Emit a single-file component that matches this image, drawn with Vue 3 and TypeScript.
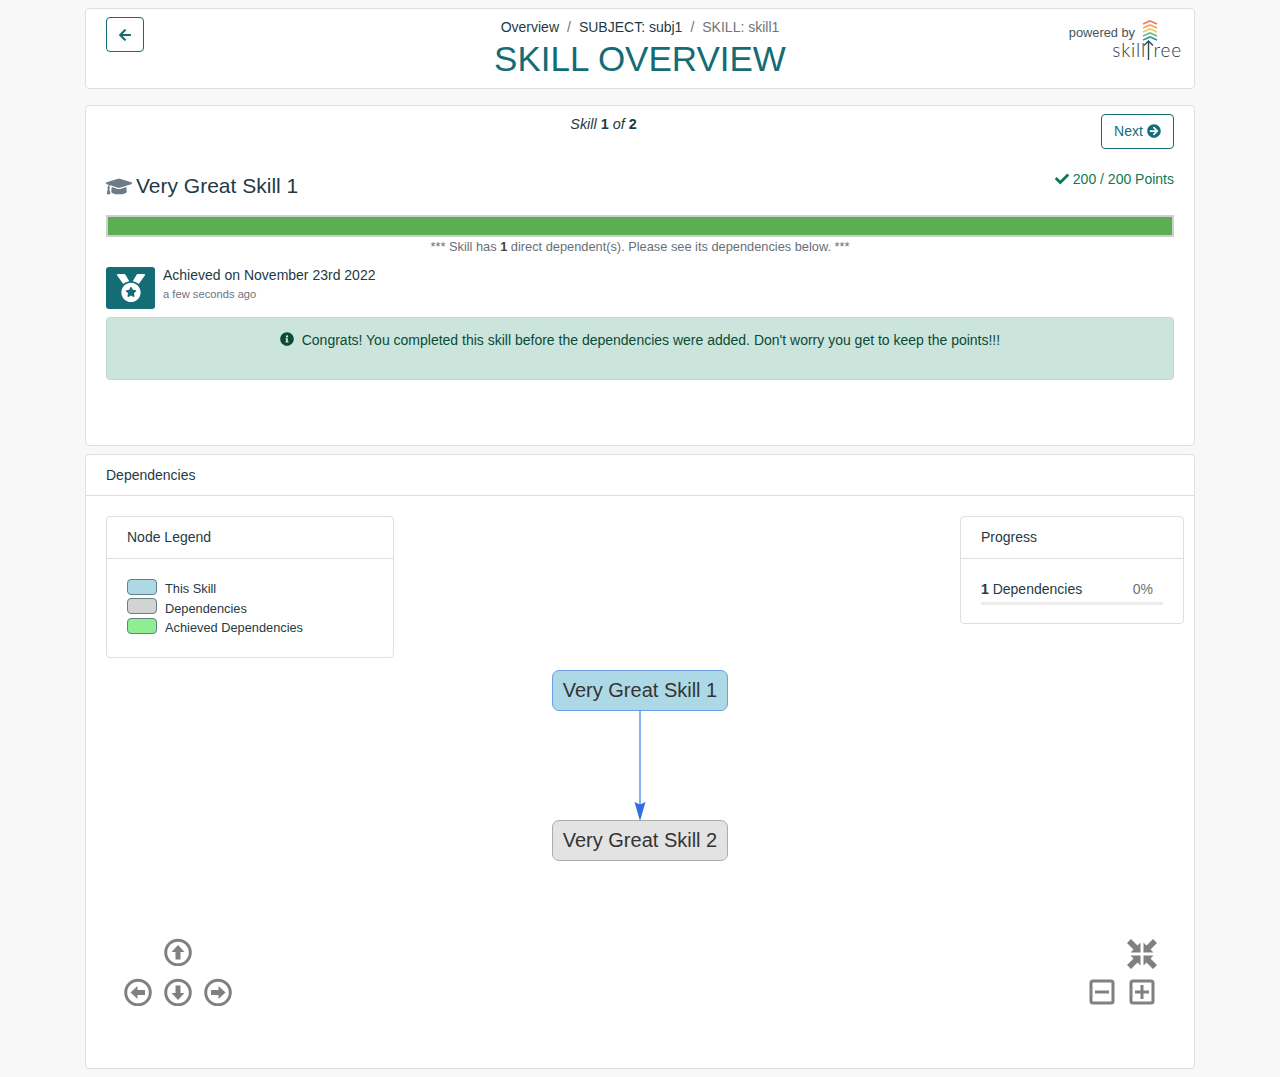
<script setup lang="ts">
const crumbs = ['Overview', 'SUBJECT: subj1']
const chevrons = [
  { y: 4, color: '#ef7a5a' },
  { y: 8, color: '#f3a35c' },
  { y: 12, color: '#f4c95f' },
  { y: 16, color: '#6fb98f' },
  { y: 20, color: '#2f9a9a' },
]
const legend = [
  { label: 'This Skill', color: '#add8e6' },
  { label: 'Dependencies', color: '#d3d3d3' },
  { label: 'Achieved Dependencies', color: '#90ee90' },
]
const nodes = [
  { label: 'Very Great Skill 1', cls: 'node-this', top: 174 },
  { label: 'Very Great Skill 2', cls: 'node-dep', top: 324 },
]
const arrows = [
  { cls: 'nav-up', rotate: 0 },
  { cls: 'nav-left', rotate: -90 },
  { cls: 'nav-down', rotate: 180 },
  { cls: 'nav-right', rotate: 90 },
]
</script>

<template>
  <div class="page">
    <section class="card head">
      <button class="btn back" aria-label="Back">
        <svg viewBox="0 0 448 512" class="ico-back"><path d="M257.5 445.1l-22.2 22.2c-9.4 9.4-24.6 9.4-33.9 0L7 273c-9.4-9.4-9.4-24.6 0-33.9L201.4 44.7c9.4-9.4 24.6-9.4 33.9 0l22.2 22.2c9.5 9.5 9.3 25-.4 34.3L136.6 216H424c13.3 0 24 10.7 24 24v32c0 13.3-10.7 24-24 24H136.6l120.5 114.8c9.8 9.3 10 24.8.4 34.3z" /></svg>
      </button>
      <div class="head-center">
        <nav class="crumbs">
          <template v-for="c in crumbs" :key="c">
            <span>{{ c }}</span><span class="sep">/</span>
          </template>
          <span class="crumb-last">SKILL: skill1</span>
        </nav>
        <h1 class="title">SKILL OVERVIEW</h1>
      </div>
      <div class="brand">
        <div class="brand-top">
          <span class="powered">powered by</span>
          <svg class="chevrons" width="16" height="24" viewBox="0 0 16 24">
            <path
              v-for="c in chevrons"
              :key="c.y"
              :d="`M1 ${c.y}L8 ${c.y - 3}L15 ${c.y}`"
              :stroke="c.color"
              stroke-width="1.7"
              fill="none"
            />
          </svg>
        </div>
        <div class="wordmark">
          <span>skill</span>
          <svg class="t-arrow" width="11" height="20" viewBox="0 0 11 20">
            <path d="M5.5 1V20M1 5.5L5.5 1L10 5.5" stroke="#2f4a55" stroke-width="1.4" fill="none" />
          </svg>
          <span>ree</span>
        </div>
      </div>
    </section>

    <section class="card skill">
      <div class="pager-row">
        <div class="pager"><em>Skill</em> <b>1</b> <em>of</em> <b>2</b></div>
        <button class="btn next">
          Next
          <svg viewBox="0 0 512 512" class="ico-next"><path d="M256 8c137 0 248 111 248 248S393 504 256 504 8 393 8 256 119 8 256 8zm-28.9 143.6l75.5 72.4H120c-13.3 0-24 10.7-24 24v16c0 13.3 10.7 24 24 24h182.6l-75.5 72.4c-9.7 9.3-9.9 24.8-.4 34.3l11 10.9c9.4 9.4 24.6 9.4 33.9 0L404.3 273c9.4-9.4 9.4-24.6 0-33.9L271.6 106.3c-9.4-9.4-24.6-9.4-33.9 0l-11 10.9c-9.5 9.6-9.3 25.1.4 34.4z" /></svg>
        </button>
      </div>
      <div class="skill-title-row">
        <h2 class="skill-title">
          <svg viewBox="0 0 640 512" class="ico-cap"><path d="M622.34 153.2L343.4 67.5c-15.2-4.67-31.6-4.67-46.79 0L17.66 153.2c-23.54 7.23-23.54 38.36 0 45.59l48.63 14.94c-10.67 13.19-17.23 29.28-17.88 46.9C38.78 266.15 32 276.11 32 288c0 10.78 5.68 19.85 13.86 25.65L20.33 428.53C18.11 438.52 25.71 448 35.94 448h56.11c10.24 0 17.84-9.48 15.62-19.47L82.14 313.65C90.32 307.85 96 298.78 96 288c0-11.57-6.47-21.25-15.66-26.87.76-15.02 8.44-28.3 20.69-36.72L296.6 284.5c9.06 2.78 26.44 6.25 46.79 0l278.95-85.7c23.55-7.24 23.55-38.36 0-45.6zM352.79 315.09c-28.53 8.76-52.84 3.92-65.59 0l-145.02-44.55L128 384c0 35.35 85.96 64 192 64s192-28.65 192-64l-14.18-113.47-145.03 44.56z" /></svg>
          <span>Very Great Skill 1</span>
        </h2>
        <div class="points">
          <svg viewBox="0 0 512 512" class="ico-check"><path d="M173.898 439.404l-166.4-166.4c-9.997-9.997-9.997-26.206 0-36.204l36.203-36.204c9.997-9.998 26.207-9.998 36.204 0L192 312.69 432.095 72.596c9.997-9.997 26.207-9.997 36.204 0l36.203 36.204c9.997 9.997 9.997 26.206 0 36.204l-294.4 294.401c-9.998 9.997-26.207 9.997-36.204-.001z" /></svg>
          200 / 200 Points
        </div>
      </div>
      <div class="bar"><div class="bar-fill" :style="{ width: '100%' }"></div></div>
      <p class="dep-note">*** Skill has <b>1</b> direct dependent(s). Please see its dependencies below. ***</p>
      <div class="achieved">
        <div class="medal">
          <svg viewBox="0 0 512 512" class="ico-medal"><path d="M223.75 130.75L154.62 15.54A31.997 31.997 0 0 0 127.18 0H16.03C3.08 0-4.5 14.57 2.92 25.18l111.27 158.96c29.72-27.77 67.52-46.83 109.56-53.39zM495.97 0H384.82c-11.24 0-21.66 5.9-27.44 15.54l-69.13 115.21c42.04 6.56 79.84 25.62 109.56 53.38L509.08 25.18C516.5 14.57 508.92 0 495.97 0zM256 160c-97.2 0-176 78.8-176 176s78.8 176 176 176 176-78.8 176-176-78.8-176-176-176zm92.52 157.26l-37.93 36.96 8.97 52.22c1.6 9.36-8.26 16.51-16.65 12.09L256 393.88l-46.9 24.65c-8.4 4.45-18.25-2.74-16.65-12.09l8.97-52.22-37.93-36.96c-6.82-6.64-3.05-18.23 6.35-19.59l52.43-7.64 23.43-47.52c2.11-4.28 6.19-6.39 10.28-6.39 4.11 0 8.22 2.14 10.33 6.39l23.43 47.52 52.43 7.64c9.4 1.36 13.17 12.95 6.35 19.59z" /></svg>
        </div>
        <div>
          <div class="achieved-on">Achieved on November 23rd 2022</div>
          <div class="achieved-ago">a few seconds ago</div>
        </div>
      </div>
      <div class="alert">
        <svg viewBox="0 0 512 512" class="ico-info"><path d="M256 8C119.043 8 8 119.083 8 256c0 136.997 111.043 248 248 248s248-111.003 248-248C504 119.083 392.957 8 256 8zm0 110c23.196 0 42 18.804 42 42s-18.804 42-42 42-42-18.804-42-42 18.804-42 42-42zm56 254c0 6.627-5.373 12-12 12h-88c-6.627 0-12-5.373-12-12v-24c0-6.627 5.373-12 12-12h12v-64h-12c-6.627 0-12-5.373-12-12v-24c0-6.627 5.373-12 12-12h64c6.627 0 12 5.373 12 12v100h12c6.627 0 12 5.373 12 12v24z" /></svg>
        Congrats! You completed this skill before the dependencies were added. Don't worry you get to keep the points!!!
      </div>
    </section>

    <section class="card deps">
      <header class="deps-header">Dependencies</header>
      <div class="graph">
        <div class="mini-card legend">
          <div class="mini-header">Node Legend</div>
          <div class="legend-body">
            <div v-for="l in legend" :key="l.label" class="legend-row">
              <span class="swatch" :style="{ background: l.color }"></span>
              <span>{{ l.label }}</span>
            </div>
          </div>
        </div>
        <div class="mini-card progress">
          <div class="mini-header">Progress</div>
          <div class="progress-body">
            <div class="progress-line">
              <span><b>1</b> Dependencies</span>
              <span class="pct">0%</span>
            </div>
            <div class="progress-track"></div>
          </div>
        </div>

        <div v-for="n in nodes" :key="n.label" class="node" :class="n.cls" :style="{ top: `${n.top}px` }">
          {{ n.label }}
        </div>
        <svg class="edge" width="14" height="110" viewBox="0 0 14 110">
          <path d="M7 0V94" stroke="#8aaef0" stroke-width="2" />
          <path d="M1.5 91L7 93.5L12.5 91L7 110Z" fill="#2f6fe3" />
        </svg>

        <svg
          v-for="a in arrows"
          :key="a.cls"
          class="nav"
          :class="a.cls"
          width="28"
          height="28"
          viewBox="0 -0.5 28 28"
        >
          <circle cx="14" cy="14" r="12.3" fill="none" stroke="#808080" stroke-width="3" />
          <path
            d="M14 6.5L20.5 13.5H16.5V21H11.5V13.5H7.5Z"
            fill="#808080"
            :transform="`rotate(${a.rotate} 14 14)`"
          />
        </svg>

        <svg class="nav nav-fit" width="32" height="32" viewBox="0 0 32 32">
          <g fill="#808080">
            <g v-for="r in [0, 90, 180, 270]" :key="r" :transform="`rotate(${r} 16 16)`">
              <path d="M14.5 14.5H4.5L7.5 11.5L1 5L5 1L11.5 7.5L14.5 4.5Z" />
            </g>
          </g>
        </svg>
        <svg class="nav nav-minus" width="26" height="26" viewBox="0 0 26 26">
          <rect x="2" y="2" width="22" height="22" rx="2" fill="none" stroke="#808080" stroke-width="3" />
          <rect x="6" y="11.5" width="14" height="3" fill="#808080" />
        </svg>
        <svg class="nav nav-plus" width="26" height="26" viewBox="0 0 26 26">
          <rect x="2" y="2" width="22" height="22" rx="2" fill="none" stroke="#808080" stroke-width="3" />
          <path d="M6 11.5H11.5V6H14.5V11.5H20V14.5H14.5V20H11.5V14.5H6Z" fill="#808080" />
        </svg>
      </div>
    </section>
  </div>
</template>

<style>
html,
body {
  background: #f8f8f8;
}
</style>

<style scoped>
.page {
  width: 1110px;
  margin: 0 auto;
  padding-top: 8px;
  display: flex;
  flex-direction: column;
  font-family: 'Liberation Sans', Arial, sans-serif;
  font-size: 14px;
  color: #1f3a44;
}

.card {
  background: #fff;
  border: 1px solid #dedede;
  border-radius: 4px;
  box-sizing: border-box;
}

.btn {
  background: #fff;
  border: 1px solid #146c75;
  border-radius: 4px;
  color: #146c75;
  font: inherit;
  padding: 0;
  box-sizing: border-box;
}

/* top header */
.head {
  height: 81px;
  display: grid;
  grid-template-columns: 1fr auto 1fr;
  padding: 8px 20px 0;
}

.back {
  width: 38px;
  height: 35px;
  display: flex;
  align-items: center;
  justify-content: center;
}

.ico-back {
  width: 12px;
  height: 14px;
  fill: #146c75;
}

.head-center {
  text-align: center;
  grid-column: 2;
}

.crumbs {
  line-height: 20px;
}

.sep {
  margin: 0 8px;
  color: #6c757d;
}

.crumb-last {
  color: #6c757d;
}

.title {
  margin: 2px 0 0;
  font-size: 35px;
  line-height: 40px;
  font-weight: 400;
  color: #146c75;
}

.brand {
  grid-column: 3;
  justify-self: end;
  display: flex;
  flex-direction: column;
  align-items: flex-end;
  margin: 3px -8px 0 0;
}

.brand-top {
  display: flex;
  align-items: flex-start;
  gap: 7px;
  margin-right: 24px;
  height: 24px;
}

.powered {
  font-size: 12.8px;
  line-height: 15px;
  margin-top: 5px;
  color: #3e5660;
}

.wordmark {
  display: flex;
  align-items: flex-end;
  font-family: Lato, 'Liberation Sans', sans-serif;
  font-weight: 300;
  font-size: 19px;
  line-height: 18px;
  letter-spacing: 0.8px;
  color: #1f3a44;
  margin-top: -4px;
}

.t-arrow {
  margin: 0 -0.5px -1px -3px;
}

/* skill card */
.skill {
  margin-top: 16px;
  height: 341px;
  padding: 8px 20px 0;
}

.pager-row {
  display: flex;
  align-items: flex-start;
}

.pager {
  flex: 1;
  text-align: center;
  font-size: 14.4px;
  line-height: 20px;
}

.next {
  width: 73px;
  height: 35px;
  padding-bottom: 2px;
  display: flex;
  align-items: center;
  justify-content: center;
  gap: 4px;
}

.ico-next {
  width: 14px;
  height: 14px;
  fill: #146c75;
}

.skill-title-row {
  display: flex;
  justify-content: space-between;
  align-items: flex-start;
  margin-top: 14px;
}

.skill-title {
  margin: 9px 0 0;
  font-size: 21px;
  line-height: 28px;
  font-weight: 400;
  display: flex;
  align-items: center;
  gap: 4px;
}

.ico-cap {
  width: 26px;
  height: 21px;
  fill: #6c7c86;
}

.points {
  color: #0b7a50;
  line-height: 20px;
  display: flex;
  align-items: center;
  gap: 4px;
  margin-top: 6px;
}

.ico-check {
  width: 14px;
  height: 14px;
  fill: #0b7a50;
}

.bar {
  margin-top: 15px;
  height: 22px;
  border: 2px solid #cfcfcf;
  box-sizing: border-box;
}

.bar-fill {
  height: 100%;
  background: #5bae52;
}

.dep-note {
  margin: 1px 0 0;
  text-align: center;
  font-size: 12.8px;
  line-height: 18px;
  color: #687078;
}

.dep-note b {
  color: #444;
}

.achieved {
  display: flex;
  gap: 8px;
  margin-top: 11px;
}

.medal {
  width: 49px;
  height: 42px;
  background: #146c75;
  border-radius: 3px;
  display: flex;
  align-items: center;
  justify-content: center;
}

.ico-medal {
  width: 28px;
  height: 30px;
  fill: #fff;
}

.achieved-on {
  line-height: 18px;
  margin-top: -1px;
}

.achieved-ago {
  font-size: 11.2px;
  line-height: 16px;
  margin-top: 2px;
  color: #6c757d;
}

.alert {
  margin-top: 8px;
  height: 63px;
  box-sizing: border-box;
  background: #cce5dc;
  border: 1px solid #b8dbcf;
  border-radius: 4px;
  padding-top: 13px;
  text-align: center;
  line-height: 18px;
  color: #0b4a35;
}

.ico-info {
  width: 14px;
  height: 14px;
  fill: #0b4a35;
  margin-right: 4px;
  vertical-align: -1px;
}

/* dependencies */
.deps {
  margin-top: 8px;
  height: 615px;
  display: flex;
  flex-direction: column;
}

.deps-header {
  height: 41px;
  box-sizing: border-box;
  padding: 11px 20px 0;
  line-height: 18px;
  border-bottom: 1px solid #dedede;
  flex: none;
}

.graph {
  position: relative;
  flex: 1;
}

.mini-card {
  position: absolute;
  top: 20px;
  background: #fff;
  border: 1px solid #dedede;
  border-radius: 4px;
  box-sizing: border-box;
}

.mini-header {
  height: 42px;
  box-sizing: border-box;
  padding: 11px 20px 0;
  line-height: 18px;
  border-bottom: 1px solid #dedede;
}

.legend {
  left: 20px;
  width: 288px;
  height: 142px;
}

.legend-body {
  padding: 19.9px 20px 0;
  font-size: 12.8px;
}

.legend-row {
  display: flex;
  align-items: center;
  gap: 8px;
  height: 19.5px;
}

.swatch {
  width: 30px;
  height: 16px;
  margin-top: -4px;
  box-sizing: border-box;
  border: 1px solid #64808a;
  border-radius: 4px;
}

.progress {
  right: 10px;
  width: 224px;
  height: 108px;
}

.progress-body {
  padding: 21px 20px 0;
}

.progress-line {
  display: flex;
  justify-content: space-between;
  line-height: 18px;
  padding-right: 10px;
}

.pct {
  color: #707070;
}

.progress-track {
  height: 3px;
  background: #ececec;
  margin-top: 4px;
}

.node {
  position: absolute;
  left: 466px;
  width: 176px;
  height: 41px;
  box-sizing: border-box;
  border-radius: 7px;
  font-size: 20px;
  line-height: 38px;
  text-align: center;
  color: #343434;
}

.node-this {
  background: #add8e6;
  border: 1.5px solid #6a9fe8;
}

.node-dep {
  background: #e3e3e3;
  border: 1.5px solid #ababab;
}

.edge {
  position: absolute;
  left: 547px;
  top: 215px;
}

.nav {
  position: absolute;
}

.nav-up { left: 78px; top: 442px; }
.nav-left { left: 38px; top: 482px; }
.nav-down { left: 78px; top: 482px; }
.nav-right { left: 118px; top: 482px; }
.nav-fit { left: 1040px; top: 442px; }
.nav-minus { left: 1003px; top: 483px; }
.nav-plus { left: 1043px; top: 483px; }
</style>
